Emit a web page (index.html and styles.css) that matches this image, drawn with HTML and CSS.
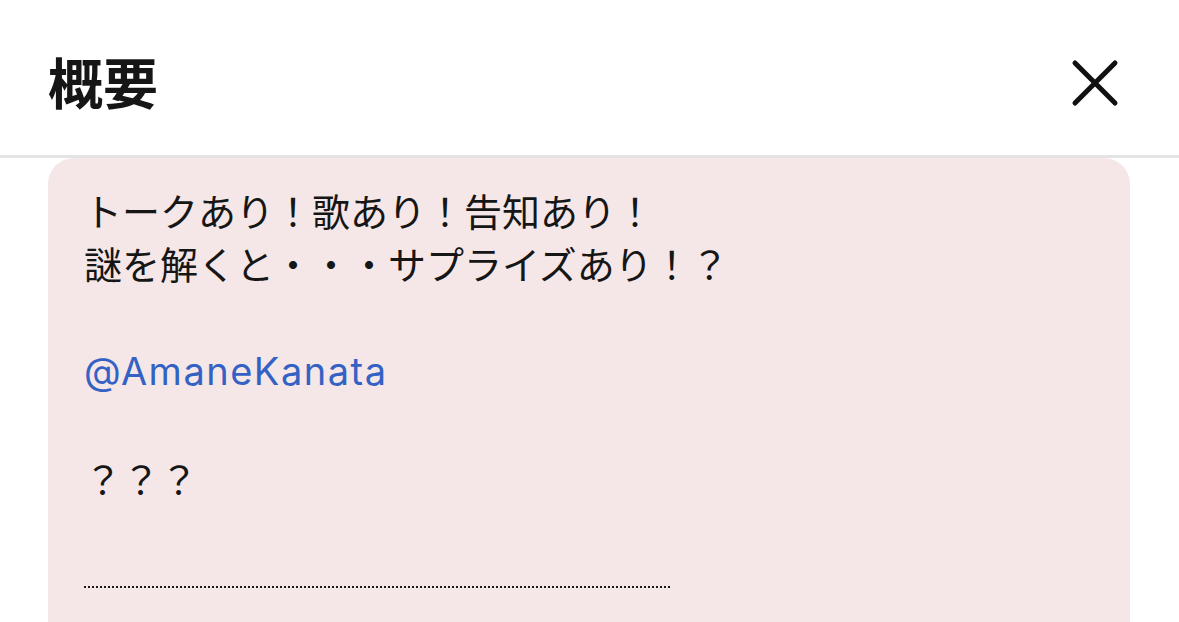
FILE: index.html
```html
<!DOCTYPE html>
<html lang="ja">
<head>
  <meta charset="UTF-8" />
  <meta name="viewport" content="width=device-width, initial-scale=1.0"/>
  <title>概要</title>
  <link rel="stylesheet" href="styles.css">
</head>
<body>

  <!-- Header -->
  <header class="sheet-head">
    <h1>概要</h1>
    <button class="close" aria-label="閉じる">
      <svg width="48" height="48" viewBox="0 0 48 48">
        <path d="M4 4 L44 44 M44 4 L4 44" stroke="#111" stroke-width="5" stroke-linecap="round" fill="none"/>
      </svg>
    </button>
  </header>

  <!-- Description -->
  <section class="desc">
    <p>トークあり！歌あり！告知あり！</p>
    <p>謎を解くと・・・サプライズあり！？</p>
    <p class="blank"></p>
    <p><a href="#">@AmaneKanata</a></p>
    <p class="blank"></p>
    <p>？？？</p>
    <p class="blank"></p>
    <div class="rule"><span></span></div>
  </section>

</body>
</html>
```

FILE: styles.css
```css
body {
  margin: 0;
  background: #fff;
  color: #161616;
  font-family: "Noto Sans CJK JP", "Noto Sans", sans-serif;
  overflow: hidden;
}
.sheet-head {
  height: 155px;
  display: flex;
  align-items: center;
  justify-content: space-between;
  padding: 0 60px 0 48px;
  border-bottom: 3px solid #e4e4e4;
}
.sheet-head h1 {
  margin: 0;
  font-size: 55px;
  font-weight: 700;
  line-height: 1;
  padding-top: 6px;
}
.close {
  background: none;
  border: none;
  padding: 0;
  width: 48px;
  height: 48px;
  margin-top: 10px;
  cursor: pointer;
}
.desc {
  margin: 0 48px;
  width: 1082px;
  background: #f5e7e7;
  border-radius: 26px 26px 0 0;
  padding: 25px 36px 40px;
  box-sizing: border-box;
  font-size: 38px;
  line-height: 53px;
}
.desc p { margin: 0; }
.desc .blank { height: 53px; }
.desc a {
  color: #3462c4;
  text-decoration: none;
  font-family: "Inter", "Noto Sans", sans-serif;
  font-size: 38px;
  letter-spacing: 1.5px;
}
.rule {
  height: 53px;
  display: flex;
  align-items: center;
}
.rule span {
  display: block;
  width: 586px;
  height: 2px;
  margin-top: 7px;
  background: repeating-linear-gradient(90deg, #1a1a1a 0 2px, transparent 2px 4px);
}
```
